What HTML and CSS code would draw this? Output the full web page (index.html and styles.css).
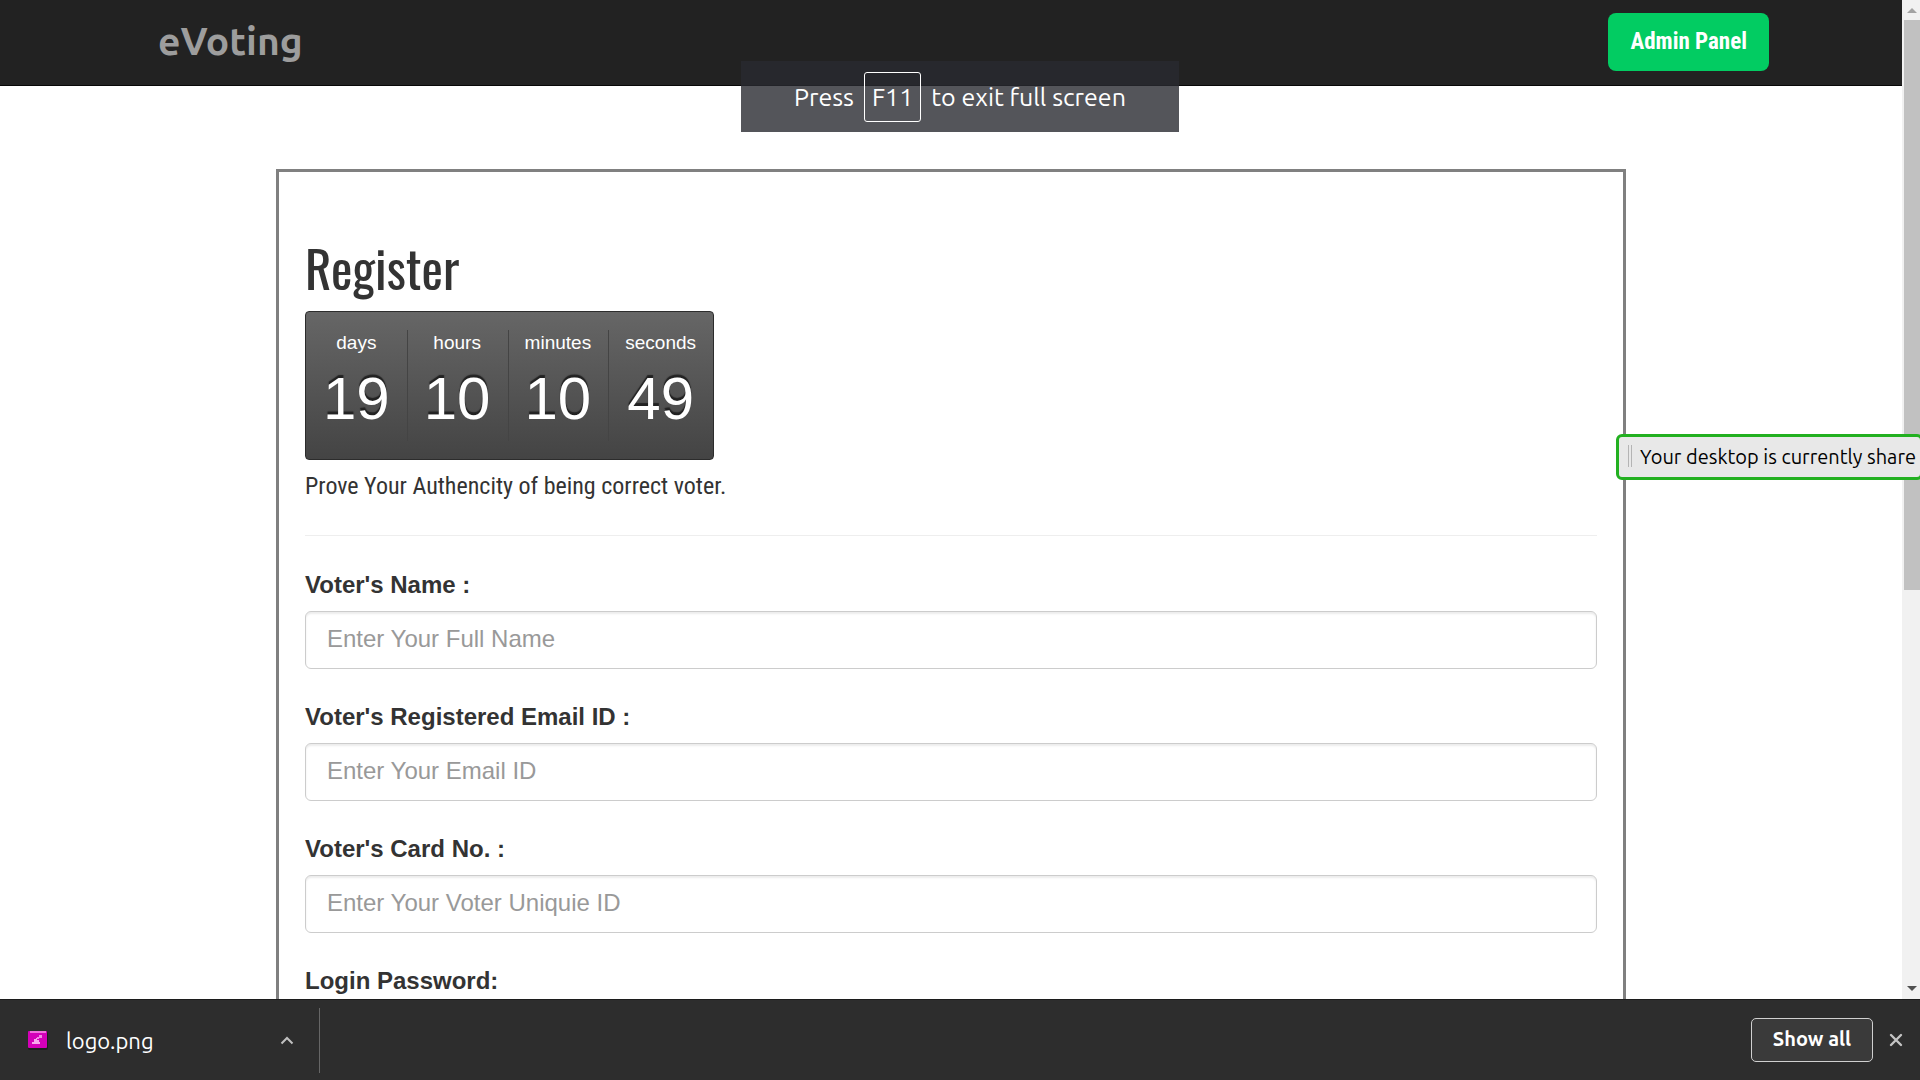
FILE: index.html
```html
<!DOCTYPE html>
<html lang="en">
<head>
<meta charset="utf-8">
<title>eVoting</title>
<link rel="stylesheet" href="styles.css">
</head>
<body>
<div class="browser">
  <div class="viewport">
    <div class="page">
      <header class="navbar">
        <div class="navbar-inner">
          <a class="brand" href="#">eVoting</a>
          <button class="admin-button" type="button">Admin Panel</button>
        </div>
      </header>
      <main class="card">
        <h1 class="title">Register</h1>
        <div class="countdown">
          <div class="unit"><span class="unit-name">days</span><span class="unit-value">19</span></div>
          <div class="unit"><span class="unit-name">hours</span><span class="unit-value">10</span></div>
          <div class="unit"><span class="unit-name">minutes</span><span class="unit-value">10</span></div>
          <div class="unit"><span class="unit-name">seconds</span><span class="unit-value">49</span></div>
        </div>
        <p class="tagline">Prove Your Authencity of being correct voter.</p>
        <hr class="rule">
        <form class="form">
          <div class="field">
            <label for="name">Voter's Name :</label>
            <input id="name" type="text" placeholder="Enter Your Full Name">
          </div>
          <div class="field">
            <label for="email">Voter's Registered Email ID :</label>
            <input id="email" type="email" placeholder="Enter Your Email ID">
          </div>
          <div class="field">
            <label for="card-no">Voter's Card No. :</label>
            <input id="card-no" type="text" placeholder="Enter Your Voter Uniquie ID">
          </div>
          <div class="field">
            <label for="password">Login Password:</label>
            <input id="password" type="password">
          </div>
        </form>
      </main>
    </div>
    <div class="scrollbar" aria-hidden="true">
      <svg class="scroll-arrow" viewBox="0 0 18 20"><path d="M5 13L10 8L15 13Z" fill="#a3a3a3"/></svg>
      <div class="scroll-track"><div class="scroll-thumb"></div></div>
      <svg class="scroll-arrow" viewBox="0 0 18 20"><path d="M5 7L10 12L15 7Z" fill="#505050"/></svg>
    </div>
  </div>
  <footer class="downloads">
    <div class="download-item">
      <svg class="file-icon" viewBox="0 0 20 19">
        <rect x="0" y="1" width="20" height="18" rx="2" fill="#1d1d1d"/>
        <rect x="0" y="0" width="19" height="17" rx="1" fill="#d400b8"/>
        <rect x="2" y="0" width="16" height="2" fill="#f070dc"/>
        <path d="M4 13V11H6V8H8V7H9V9H11V11H12V13Z" fill="#f7a6ec"/>
        <path d="M11 4H14V7H11ZM9 6H11V8H9Z" fill="#f28be4"/>
      </svg>
      <span class="file-name">logo.png</span>
      <button class="icon-button" type="button" aria-label="Download options">
        <svg class="chevron" viewBox="0 0 14 9"><path d="M1.500 7.500L7 2L12.500 7.500" fill="none" stroke="#c0c0c0" stroke-width="2"/></svg>
      </button>
    </div>
    <div class="download-actions">
      <button class="show-all" type="button">Show all</button>
      <button class="icon-button" type="button" aria-label="Close">
        <svg class="close" viewBox="0 0 14 14"><path d="M2 2L12 12M12 2L2 12" fill="none" stroke="#c4c4c4" stroke-width="2.400" stroke-linecap="round"/></svg>
      </button>
    </div>
  </footer>
  <div class="fullscreen-toast" role="status"><span>Press</span><kbd>F11</kbd><span>to exit full screen</span></div>
  <div class="share-notice" role="status"><span class="grip"></span><span>Your desktop is currently share</span></div>
</div>
</body>
</html>
```
FILE: styles.css
```css
* { box-sizing: border-box; }

body {
  margin: 0;
  background: #fff;
  color: #333;
  font-family: "Liberation Sans", Arial, sans-serif;
  font-size: 24px;
}

button { font: inherit; cursor: pointer; }

.browser {
  position: relative;
  display: flex;
  flex-direction: column;
  height: 100vh;
  overflow: hidden;
}

.viewport {
  display: flex;
  flex: 1;
  min-height: 0;
}

.page {
  flex: 1;
  overflow: hidden;
}

.navbar {
  background: #222;
  border-bottom: 1px solid #080808;
  padding: 13px 133px 14px;
}

.navbar-inner {
  display: flex;
  align-items: center;
  justify-content: space-between;
}

.brand {
  padding: 0 0 2px 25px;
  color: #9d9d9d;
  font-family: Ubuntu, "Noto Sans", sans-serif;
  font-size: 39px;
  font-weight: 600;
  line-height: 56px;
  text-decoration: none;
}

.admin-button {
  height: 58px;
  padding: 0 22px 2px;
  border: 0;
  border-radius: 8px;
  background: #02cc62;
  color: #fff;
  font-family: "Roboto Condensed", "Liberation Sans Narrow", sans-serif;
  font-size: 23px;
  font-weight: 700;
}

.card {
  max-width: 1350px;
  margin: 83px auto 0;
  padding: 61px 26px;
  border: 3px solid #808080;
}

.title {
  margin: 0;
  font-family: Oswald, "Roboto Condensed", "Liberation Sans Narrow", sans-serif;
  font-size: 51px;
  font-weight: 400;
  line-height: 68px;
}

.countdown {
  display: inline-flex;
  margin-top: 10px;
  padding: 18px 0;
  border: 1px solid #2c2c2c;
  border-radius: 4px;
  background: linear-gradient(#666, #444);
  color: #fff;
}

.unit {
  display: flex;
  flex-direction: column;
  align-items: center;
  padding: 0 17px;
}

.unit + .unit {
  padding-left: 16px;
  border-left: 1px solid #444;
}

.unit-name {
  font-size: 19px;
  line-height: 26px;
}

.unit-value {
  height: 85px;
  font-size: 60px;
  line-height: 85px;
  text-shadow: 0 -3px 1px #222;
}

.tagline {
  margin: 9px 0 0;
  font-family: "Roboto Condensed", "Liberation Sans Narrow", sans-serif;
  line-height: 34px;
}

.rule {
  margin: 32px 0;
  border: 0;
  border-top: 1px solid #eee;
}

.form {
  display: grid;
  gap: 31px;
}

.field {
  display: grid;
  gap: 9px;
}

.field label {
  font-weight: 700;
  line-height: 34px;
}

.field input {
  width: 100%;
  height: 58px;
  padding: 0 21px 3px;
  border: 1px solid #ccc;
  border-radius: 6px;
  box-shadow: inset 0 2px 2px rgba(0, 0, 0, .08);
  color: #555;
  font: inherit;
}

.field input::placeholder { color: #999; }

.scrollbar {
  display: flex;
  flex-direction: column;
  width: 18px;
  background: #f1f1f1;
}

.scroll-arrow {
  width: 18px;
  height: 20px;
}

.scroll-track {
  flex: 1;
  padding-left: 2px;
}

.scroll-thumb {
  height: 59.4%;
  background: #c1c1c1;
}

.downloads {
  display: flex;
  align-items: center;
  justify-content: space-between;
  height: 81px;
  padding: 0 17px 0 28px;
  border-top: 1px solid #1c1c1c;
  background: #2d2d2d;
  color: #fff;
  font-family: Ubuntu, "Noto Sans", sans-serif;
  font-size: 20px;
}

.download-item {
  display: flex;
  align-items: center;
  width: 292px;
  height: 65px;
  padding-right: 25px;
  border-right: 1px solid #666;
}

.file-icon {
  width: 20px;
  height: 19px;
  margin-right: 18px;
}

.file-name {
  flex: 1;
  font-size: 22px;
}

.icon-button {
  display: flex;
  padding: 0;
  border: 0;
  background: none;
}

.chevron {
  width: 14px;
  height: 9px;
}

.close {
  width: 14px;
  height: 14px;
}

.download-actions {
  display: flex;
  align-items: center;
  gap: 16px;
}

.show-all {
  width: 122px;
  height: 44px;
  padding: 0 0 4px;
  border: 1px solid #d0d0d0;
  border-radius: 5px;
  background: #3a3a3a;
  color: #fff;
  font-weight: 600;
}

.fullscreen-toast {
  position: absolute;
  top: 61px;
  left: 50%;
  display: flex;
  align-items: center;
  justify-content: center;
  gap: 10px;
  width: 438px;
  height: 71px;
  transform: translateX(-50%);
  background: rgba(41, 43, 49, .8);
  color: #fff;
  font-family: Ubuntu, "Noto Sans", sans-serif;
  font-size: 25px;
}

.fullscreen-toast kbd {
  padding: 0 7px;
  border: 1px solid #fff;
  border-radius: 3px;
  font: inherit;
  line-height: 48px;
}

.share-notice {
  position: absolute;
  top: 434px;
  right: -3px;
  display: flex;
  align-items: center;
  gap: 8px;
  width: 307px;
  height: 46px;
  padding: 0 0 2px 9px;
  border: 3px solid #22b020;
  border-radius: 6px;
  background: #e8e8e8;
  color: #000;
  font-family: Ubuntu, "Noto Sans", sans-serif;
  font-size: 20px;
  white-space: nowrap;
}

.grip {
  width: 4px;
  height: 22px;
  border: solid #b4b4b4;
  border-width: 0 1px;
}
```
